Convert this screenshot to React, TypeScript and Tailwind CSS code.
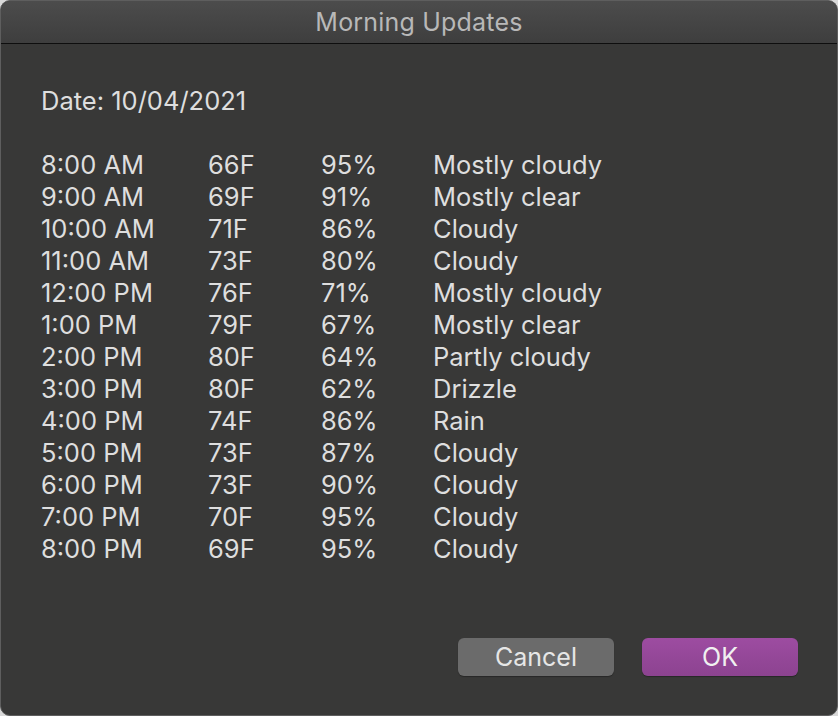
const rows = [
  ['8:00 AM', '66F', '95%', 'Mostly cloudy'],
  ['9:00 AM', '69F', '91%', 'Mostly clear'],
  ['10:00 AM', '71F', '86%', 'Cloudy'],
  ['11:00 AM', '73F', '80%', 'Cloudy'],
  ['12:00 PM', '76F', '71%', 'Mostly cloudy'],
  ['1:00 PM', '79F', '67%', 'Mostly clear'],
  ['2:00 PM', '80F', '64%', 'Partly cloudy'],
  ['3:00 PM', '80F', '62%', 'Drizzle'],
  ['4:00 PM', '74F', '86%', 'Rain'],
  ['5:00 PM', '73F', '87%', 'Cloudy'],
  ['6:00 PM', '73F', '90%', 'Cloudy'],
  ['7:00 PM', '70F', '95%', 'Cloudy'],
  ['8:00 PM', '69F', '95%', 'Cloudy'],
];

export default function App() {
  return (
    <div className="w-[838px] h-[716px] bg-[#d9d9d9] font-['Inter',sans-serif]">
      <div className="w-full h-full flex flex-col rounded-[10px] overflow-hidden border border-[#5e5e5e] bg-[#383837]">
        <div className="h-[43px] shrink-0 flex items-center justify-center pt-[2px] bg-gradient-to-b from-[#4c4c4c] to-[#3e3e3e] border-b border-[#0e0e0e]">
          <span className="text-[25px] text-[#b8b8b8] tracking-[0.2px]">Morning Updates</span>
        </div>

        <div className="flex-1 flex flex-col pl-[40px] pr-[39px] pt-[41px] text-[#dedede] text-[25.5px] leading-[32px]">
          <div>Date: 10/04/2021</div>

          <div className="mt-[32px]">
            {rows.map(([time, temp, hum, cond]) => (
              <div key={time} className="grid grid-cols-[167px_113px_112px_1fr]">
                <span>{time}</span>
                <span>{temp}</span>
                <span>{hum}</span>
                <span>{cond}</span>
              </div>
            ))}
          </div>

          <div className="mt-[73px] flex justify-end gap-[28px]">
            <button className="w-[156px] h-[38px] rounded-[6px] bg-[#6b6b6b] text-[#e6e6e6] text-[25px] shadow-[0_1px_1px_rgba(0,0,0,0.3)]">
              Cancel
            </button>
            <button className="w-[156px] h-[38px] rounded-[6px] bg-gradient-to-b from-[#9d4ca1] to-[#8c4390] text-[#f0f0f0] text-[25px] shadow-[0_1px_1px_rgba(0,0,0,0.3)]">
              OK
            </button>
          </div>
        </div>
      </div>
    </div>
  );
}
